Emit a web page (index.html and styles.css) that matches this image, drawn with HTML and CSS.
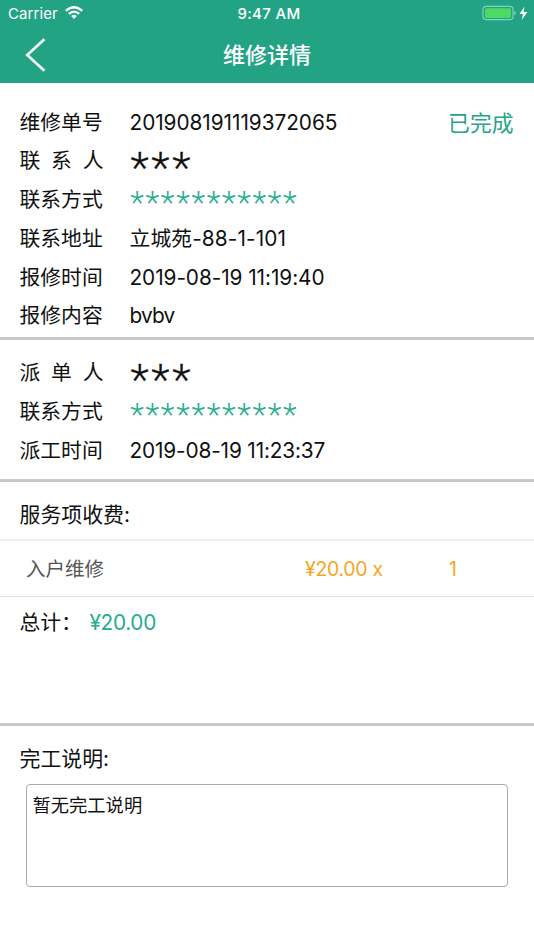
FILE: index.html
```html
<!DOCTYPE html>
<html lang="zh-CN">
<head>
<meta charset="utf-8">
<title>维修详情</title>
<link rel="stylesheet" href="styles.css">
</head>
<body>
<header class="header">
  <div class="status">
    <div class="status-left"><span>Carrier</span>
      <svg class="wifi" viewBox="0 0 18 13" width="18" height="13"><g fill="none" stroke="#fff" stroke-width="2.3"><path d="M.8 4.8Q9-2.2 17.2 4.8"/><path d="M3.8 7.9Q9 3.4 14.2 7.9"/></g><path d="M6.1 10Q9 7.7 11.9 10L9 12.9Z" fill="#fff"/></svg>
    </div>
    <div class="time">9:47 AM</div>
    <div class="status-right">
      <svg viewBox="0 0 46 16" width="46" height="16"><rect x="1" y="1.3" width="30" height="13.4" rx="3.2" fill="none" stroke="#86cfba" stroke-width="1.2"/><rect x="3" y="3.2" width="26" height="9.7" rx="1.7" fill="#4cd964"/><path d="M32.4 5.8q1.6.7 1.6 2.2t-1.6 2.2z" fill="#86cfba"/><path d="M42.6 1.6 37.6 8.9h3.4L39.7 15.1 45.4 7h-3.9z" fill="#fff"/></svg>
    </div>
  </div>
  <nav class="nav">
    <svg class="back" viewBox="0 0 22 36" width="22" height="36"><path d="M19.4 2.2 2.2 18l17.2 15.8" fill="none" stroke="#fff" stroke-width="2.6"/></svg>
    <h1>维修详情</h1>
  </nav>
</header>
<main>
  <section class="info order">
    <div class="row"><span class="label">维修单号</span><span class="value number">201908191119372065</span><span class="state">已完成</span></div>
    <div class="row"><span class="label spread"><i>联</i><i>系</i><i>人</i></span><span class="value name">***</span></div>
    <div class="row"><span class="label">联系方式</span><span class="value phone">***********</span></div>
    <div class="row"><span class="label">联系地址</span><span class="value address">立城苑-88-1-101</span></div>
    <div class="row"><span class="label">报修时间</span><span class="value">2019-08-19 11:19:40</span></div>
    <div class="row"><span class="label">报修内容</span><span class="value content">bvbv</span></div>
  </section>
  <section class="info dispatch">
    <div class="row"><span class="label spread"><i>派</i><i>单</i><i>人</i></span><span class="value name">***</span></div>
    <div class="row"><span class="label">联系方式</span><span class="value phone">***********</span></div>
    <div class="row"><span class="label">派工时间</span><span class="value date">2019-08-19 11:23:37</span></div>
  </section>
  <section class="fees">
    <h2>服务项收费:</h2>
    <div class="item"><span class="item-name">入户维修</span><span class="price">¥20.00 x</span><span class="count">1</span></div>
    <div class="total"><span>总计：</span><span class="amount">¥20.00</span></div>
  </section>
  <section class="remark">
    <h2>完工说明:</h2>
    <div class="note">暂无完工说明</div>
  </section>
</main>
</body>
</html>
```
FILE: styles.css
```css
* { box-sizing: border-box; }
body { margin: 0; background: #fff; color: #111; font: 20.8px/38.75px Inter, "Noto Sans CJK SC", sans-serif; }
i { font-style: normal; }
h1, h2 { margin: 0; font-weight: 400; }
.header { height: 82.5px; background: #22a484; color: #fff; }
.status { display: grid; grid-template-columns: 1fr auto 1fr; align-items: center; height: 27px; padding: 0 6px 0 8px; font-size: 15px; line-height: 27px; }
.status-left { display: flex; align-items: center; gap: 7px; letter-spacing: .1px; }
.wifi { margin-bottom: 2px; }
.time { margin-left: 2px; font-weight: 500; letter-spacing: .35px; }
.status-right { display: flex; justify-content: flex-end; margin-top: -2px; }
.nav { display: grid; grid-template-columns: 60px 1fr 60px; align-items: center; height: 55px; }
.back { margin-left: 24.5px; }
h1 { padding-top: 1px; text-align: center; font-size: 22px; font-weight: 500; }
.info { border-bottom: 3px solid #c8c8c8; }
.order { height: 257px; padding-top: 21px; }
.dispatch { height: 142.5px; padding-top: 14.5px; }
.row { display: grid; grid-template-columns: 110px 1fr auto; height: 38.75px; padding: 0 20.5px 0 19.5px; white-space: nowrap; }
.value { letter-spacing: -.07px; }
.value.date { letter-spacing: -.15px; }
.value.content { letter-spacing: -.8px; }
.value.address { letter-spacing: .1px; }
.spread { display: flex; justify-content: space-between; width: 84px; }
.value.number { letter-spacing: -.05px; }
.value.name { font: 300 43px/38.75px Roboto, sans-serif; height: 38.75px; letter-spacing: 2.6px; transform: translate(1px, 5.5px); -webkit-text-stroke: .3px; }
.value.phone { font: 300 32px/38.75px Roboto, sans-serif; height: 38.75px; letter-spacing: 1.7px; transform: translate(.8px, 2px); color: #26ac8e; }
.state { font-size: 21.8px; color: #26a587; }
.fees { height: 244px; border-bottom: 3px solid #c8c8c8; }
h2 { padding-left: 19.5px; font-size: 20.9px; }
.fees h2 { height: 59px; padding-top: 14px; border-bottom: 2px solid #eee; }
.item { display: grid; grid-template-columns: 279px 144px 1fr; height: 56px; padding-left: 26px; border-bottom: 1px solid #e2e2e2; font-size: 19.5px; line-height: 57px; color: #555; }
.price, .count { color: #f5a623; }
.price { letter-spacing: -.3px; }
.total { display: flex; padding: 7px 0 0 19.5px; }
.amount { margin-left: 7.5px; letter-spacing: -.3px; color: #26ac8e; }
.remark h2 { height: 58px; padding-top: 14px; }
.note { width: 482px; height: 103px; margin-left: 26px; padding: 3px 5.5px; border: 1.5px solid #aaa; border-radius: 4px; font-size: 18.3px; line-height: 34px; }
```
